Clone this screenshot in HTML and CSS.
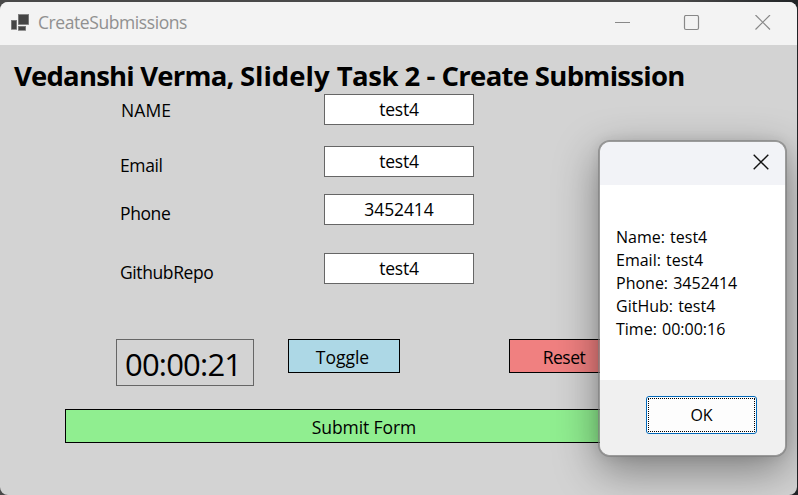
FILE: index.html
```html
<!DOCTYPE html>
<html lang="en">
<head>
<meta charset="utf-8">
<title>CreateSubmissions</title>
<link rel="stylesheet" href="styles.css">
</head>
<body>
<main class="window">
  <header class="titlebar">
    <svg class="app-icon" width="20" height="18" viewBox="0 0 20 18"><g fill="#444" stroke="#777" stroke-width=".6"><rect x="1.3" y="6.3" width="5.4" height="9"/><rect x="8.3" y=".5" width="10.4" height="10"/><rect x="8.3" y="12.3" width="7.4" height="4"/></g></svg>
    <span class="caption">CreateSubmissions</span>
    <svg class="controls" width="156" height="16" viewBox="0 0 156 16" fill="none" stroke="#888" stroke-width="1.2"><path d="M0 7.500H15M140.500 0L155 14.500M155 0L140.500 14.500"/><rect x="69.500" y=".500" width="14" height="14" rx="1.500"/></svg>
  </header>
  <form class="form">
    <h1 class="heading"><span class="author">Vedanshi Verma, </span><span class="company">Slidely </span>Task 2 - <span class="action">Create Submission</span></h1>
    <div class="row row-name"><label class="label">NAME</label><div class="field">test4</div></div>
    <div class="row row-email"><label class="label">Email</label><div class="field">test4</div></div>
    <div class="row row-phone"><label class="label">Phone</label><div class="field number">3452414</div></div>
    <div class="row row-repo"><label class="label">GithubRepo</label><div class="field">test4</div></div>
    <div class="actions">
      <div class="timer">00:00:21</div>
      <div class="button toggle">Toggle</div>
      <div class="button reset">Reset</div>
    </div>
    <div class="button submit">Submit Form</div>
  </form>
</main>
<section class="dialog">
  <div class="dialog-bar"><svg width="16" height="16" viewBox="0 0 16 16" stroke="#111" stroke-width="1.4"><path d="M.7.700L15.300 15.300M15.300.7L.7 15.300"/></svg></div>
  <div class="message">
    <div>Name: test4</div>
    <div>Email: test4</div>
    <div>Phone: 3452414</div>
    <div>GitHub: test4</div>
    <div>Time: 00:00:16</div>
  </div>
  <div class="dialog-footer"><div class="ok"><span class="ok-focus">OK</span></div></div>
</section>
</body>
</html>
```
FILE: styles.css
```css
* { box-sizing: border-box; }
body {
  margin: 0;
  width: 798px;
  height: 495px;
  padding: 2px 1px 0 0;
  overflow: hidden;
  position: relative;
  background: linear-gradient(90deg, #494949 0, #494949 85%, #202326 100%);
  color: #000;
  font: 17.500px/24px "Open Sans", "Noto Sans", sans-serif;
  white-space: nowrap;
}
.window {
  height: 493px;
  overflow: hidden;
  border-radius: 8px;
  background: #d3d3d3;
}
.titlebar {
  display: flex;
  align-items: center;
  height: 43px;
  padding: 0 26px 2px 10px;
  background: #f3f3f3;
}
.app-icon { flex: none; }
.caption { margin-left: 8px; padding-bottom: 2px; color: #909090; letter-spacing: -.42px; }
.controls { flex: none; margin-left: auto; }
.form { margin: 0; }
.heading {
  height: 49px;
  margin: 0;
  padding: 11px 0 0 14px;
  font-size: 27.500px;
  line-height: 40px;
  font-weight: 700;
  letter-spacing: -.5px;
}
.author { letter-spacing: -.8px; }
.company { letter-spacing: 0; }
.action { letter-spacing: -.69px; }
.row {
  display: grid;
  grid-template-columns: 204px 150px;
  height: 31px;
  padding-left: 120px;
}
.row-email { margin-top: 21px; }
.row-phone { margin-top: 17px; }
.row-repo { margin-top: 28px; }
.label { padding-top: 7px; letter-spacing: -.4px; }
.row-name .label { padding: 4px 0 0 1px; letter-spacing: .1px; }
.field {
  height: 31px;
  border: 1px solid #666;
  background: #fff;
  text-align: center;
  line-height: 28px;
  letter-spacing: -.2px;
}
.number { letter-spacing: -.1px; }
.actions {
  display: flex;
  align-items: flex-start;
  height: 70px;
  margin-top: 55px;
  padding-left: 116px;
}
.timer {
  width: 138px;
  height: 47px;
  padding-left: 8px;
  border: 1px solid #666;
  font-size: 31px;
  line-height: 49px;
  letter-spacing: -.8px;
}
.button {
  flex: none;
  height: 34px;
  border: 1px solid #000;
  text-align: center;
  line-height: 35px;
}
.toggle { width: 112px; margin-left: 34px; padding-right: 3px; background: #add8e6; letter-spacing: 0; }
.reset { width: 112px; margin-left: 109px; padding-right: 2px; background: #f08080; letter-spacing: -.55px; }
.submit { width: 600px; margin-left: 65px; padding-right: 2px; background: #90ee90; letter-spacing: -.1px; }
.dialog {
  position: absolute;
  left: 598px;
  top: 140px;
  width: 189px;
  height: 317px;
  overflow: hidden;
  border: 2px solid rgba(125, 125, 125, .65);
  border-radius: 12px;
  background: #fff;
  background-clip: padding-box;
  box-shadow: 0 14px 44px rgba(0, 0, 0, .4), 0 0 12px rgba(0, 0, 0, .08);
}
.dialog-bar {
  display: flex;
  justify-content: flex-end;
  height: 43px;
  padding: 12px 16px 0 0;
  background: #f2f3f7;
}
.message {
  height: 195px;
  padding: 41px 0 0 16px;
  font-size: 16px;
  line-height: 23px;
  word-spacing: 1px;
}
.dialog-footer {
  height: 75px;
  padding: 16px 0 0 46px;
  background: #f0f0f0;
}
.ok {
  width: 111px;
  height: 38px;
  padding: 1px;
  border: 1px solid #0067b8;
  border-radius: 3px;
  background: #fdfdfd;
}
.ok-focus {
  display: block;
  height: 34px;
  border: 1px dotted #000;
  font-size: 16px;
  line-height: 33px;
  text-align: center;
  letter-spacing: 0;
}
```
